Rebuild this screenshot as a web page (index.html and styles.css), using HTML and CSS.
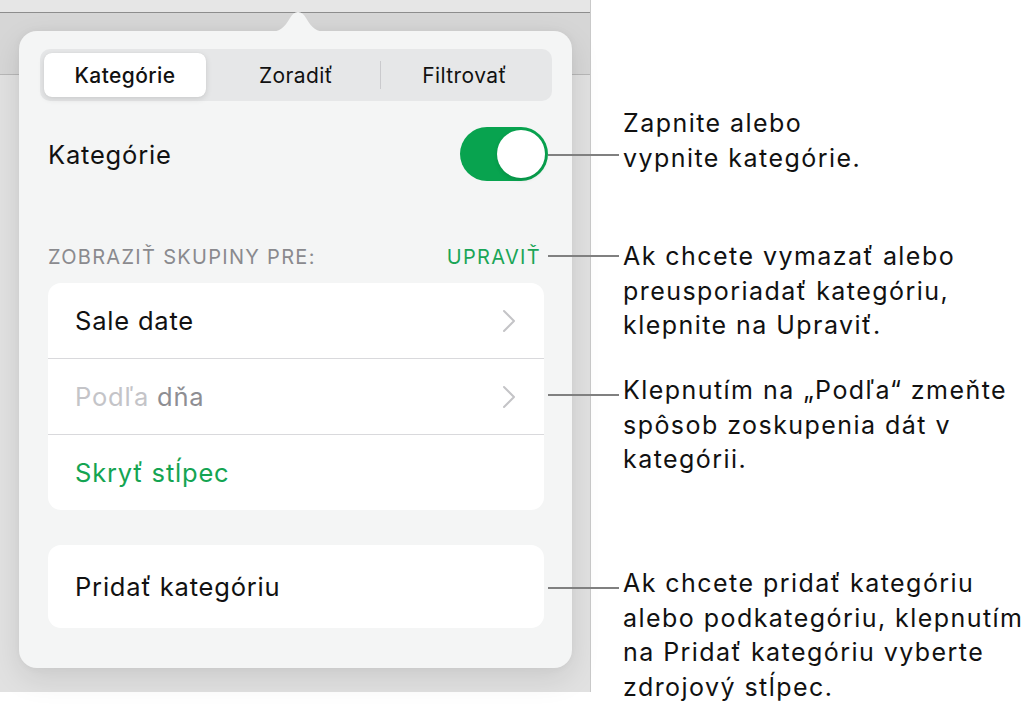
FILE: index.html
```html
<!DOCTYPE html>
<html lang="sk">
<head>
<meta charset="utf-8">
<title>Kategórie</title>
<link rel="stylesheet" href="styles.css">
</head>
<body>
<div class="stage">
  <div class="device">
    <div class="topbar"></div>
    <div class="toolbar"></div>

    <div class="popover">
      <svg class="arrow" width="60" height="24" viewBox="0 0 60 24" aria-hidden="true">
        <path d="M0 24 C12 24 16 20 22 10 C26 2 34 2 38 10 C44 20 48 24 60 24 Z" fill="#f4f5f5"/>
      </svg>

      <div class="segmented">
        <div class="seg seg-active">Kategórie</div>
        <div class="seg">Zoradiť</div>
        <div class="seg seg-last">Filtrovať</div>
      </div>

      <div class="content">
        <div class="toggle-row">
          <span class="row-title">Kategórie</span>
          <span class="switch"><span class="knob"></span></span>
        </div>

        <div class="section-header">
          <span>ZOBRAZIŤ SKUPINY PRE:</span>
          <span class="edit">UPRAVIŤ</span>
        </div>

        <div class="group">
          <div class="row">
            <span class="label">Sale date</span>
            <svg class="chev" width="14" height="24" viewBox="0 0 14 24"><path d="M2 2 L12 12 L2 22" fill="none" stroke="#c4c4c7" stroke-width="2" stroke-linecap="round" stroke-linejoin="round"/></svg>
          </div>
          <div class="row">
            <span class="label"><span class="faint">Podľa</span> <span class="muted">dňa</span></span>
            <svg class="chev" width="14" height="24" viewBox="0 0 14 24"><path d="M2 2 L12 12 L2 22" fill="none" stroke="#c4c4c7" stroke-width="2" stroke-linecap="round" stroke-linejoin="round"/></svg>
          </div>
          <div class="row">
            <span class="label green">Skryť stĺpec</span>
          </div>
        </div>

        <div class="group group-add">
          <div class="row">
            <span class="label">Pridať kategóriu</span>
          </div>
        </div>
      </div>
    </div>
  </div>

  <div class="leader l1"></div>
  <div class="leader l2"></div>
  <div class="leader l3"></div>
  <div class="leader l4"></div>

  <p class="note n1">Zapnite alebo<br>vypnite kategórie.</p>
  <p class="note n2">Ak chcete vymazať alebo<br>preusporiadať kategóriu,<br>klepnite na Upraviť.</p>
  <p class="note n3">Klepnutím na „Podľa“ zmeňte<br>spôsob zoskupenia dát v<br>kategórii.</p>
  <p class="note n4">Ak chcete pridať kategóriu<br>alebo podkategóriu, klepnutím<br>na Pridať kategóriu vyberte<br>zdrojový stĺpec.</p>
</div>
</body>
</html>
```

FILE: styles.css
```css
* { box-sizing: border-box; }

html, body {
  margin: 0;
  padding: 0;
  background: #ffffff;
}

body {
  font-family: "Inter", "Roboto", "Liberation Sans", sans-serif;
  color: #111111;
}

.stage {
  position: relative;
  width: 1029px;
  height: 708px;
  overflow: hidden;
}

/* ---------- device screenshot ---------- */
.device {
  position: relative;
  width: 591px;
  height: 692px;
  background: #e1e1e1;
  border-right: 1px solid #c9c9c9;
}

.topbar {
  height: 13px;
  background: #e6e6e6;
  border-bottom: 1px solid #8d8d8d;
}

.toolbar {
  height: 62px;
  background: #d6d6d6;
  border-bottom: 1px solid #b7b7b7;
}

/* ---------- popover ---------- */
.popover {
  position: absolute;
  left: 19px;
  top: 31px;
  width: 553px;
  height: 637px;
  background: #f4f5f5;
  border-radius: 18px;
  padding: 18px 20px 40px 21px;
  box-shadow: 0 10px 30px rgba(0, 0, 0, 0.10), 0 0 8px rgba(0, 0, 0, 0.04);
}

.arrow {
  position: absolute;
  top: -23px;
  left: 249px;
  display: block;
}

.segmented {
  display: grid;
  grid-template-columns: 1fr 1fr 1fr;
  height: 52px;
  padding: 4px;
  background: #e6e7e8;
  border-radius: 10px;
}

.seg {
  display: flex;
  align-items: center;
  justify-content: center;
  font-size: 21px;
  font-weight: 400;
  letter-spacing: 0.4px;
  color: #111;
}

.seg-active {
  margin-right: 6px;
  background: #ffffff;
  border-radius: 8px;
  font-weight: 500;
  box-shadow: 0 2px 6px rgba(0, 0, 0, 0.12), 0 0 1px rgba(0, 0, 0, 0.10);
}

.seg-last {
  border-left: 1px solid #cacacd;
  border-image: linear-gradient(to bottom, transparent 9px, #cacacd 9px, #cacacd 35px, transparent 35px) 1;
}

.content {
  padding: 0 8px;
}

.toggle-row {
  display: flex;
  align-items: center;
  justify-content: space-between;
  height: 54px;
  margin-top: 26px;
}

.row-title {
  font-size: 25.5px;
  letter-spacing: 0.8px;
}

.switch {
  display: flex;
  justify-content: flex-end;
  align-items: center;
  width: 88px;
  height: 54px;
  margin-right: -4px;
  padding: 3px;
  background: #08a34f;
  border-radius: 27px;
}

.knob {
  width: 48px;
  height: 48px;
  border-radius: 50%;
  background: #ffffff;
  box-shadow: 0 2px 4px rgba(0, 0, 0, 0.12);
}

.section-header {
  display: flex;
  justify-content: space-between;
  align-items: center;
  height: 24px;
  margin-top: 64px;
  padding-right: 3px;
  font-size: 20px;
  letter-spacing: 1.3px;
  color: #8a8a8e;
}

.edit {
  color: #1aa557;
}

.group {
  margin-top: 14px;
  background: #ffffff;
  border-radius: 13px;
  overflow: hidden;
}

.group-add {
  margin-top: 35px;
}

.row {
  display: flex;
  align-items: center;
  justify-content: space-between;
  height: 76px;
  padding: 0 28px 0 27px;
  border-top: 1px solid #d9d9dc;
}

.row:first-child {
  border-top: none;
  height: 75px;
}

.group-add .row {
  height: 83px;
}

.label {
  font-size: 25.5px;
  letter-spacing: 0.8px;
  color: #111;
}

.faint { color: #c4c4c8; }
.muted { color: #8e8e93; }
.green { color: #14a452; }

.chev {
  display: block;
}

/* ---------- callouts ---------- */
.leader {
  position: absolute;
  left: 548px;
  width: 71px;
  height: 2px;
  background: #808080;
}

.l1 { top: 154px; }
.l2 { top: 255px; }
.l3 { top: 394px; }
.l4 { top: 587px; }

.note {
  position: absolute;
  left: 623px;
  margin: 0;
  font-size: 25px;
  line-height: 34.5px;
  letter-spacing: 1.45px;
  color: #111;
  white-space: nowrap;
}

.n1 { top: 106px; }
.n2 { top: 239px; }
.n3 { top: 373px; }
.n4 { top: 566px; }
```
